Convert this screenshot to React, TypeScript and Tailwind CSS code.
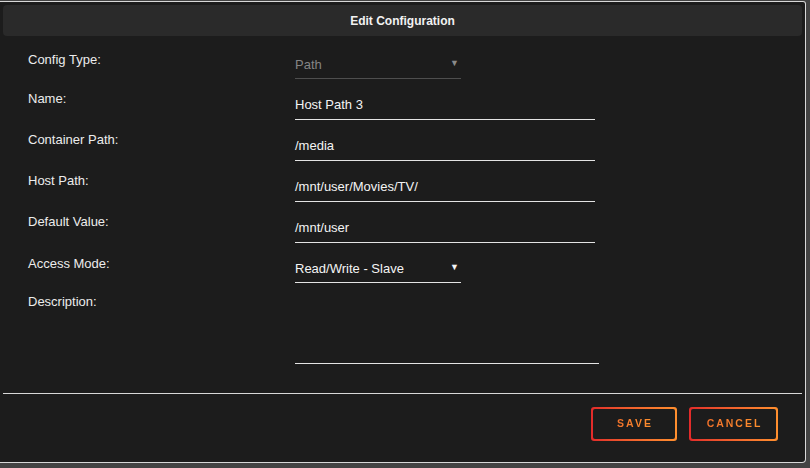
import type { ReactNode } from "react";

const FONT = "font-['Liberation_Sans',Arial,sans-serif]";

function Row({ label, h, children }: { label: string; h: string; children: ReactNode }) {
  return (
    <div className={`flex ${h}`}>
      <div className="w-[295px] shrink-0 pl-[28px] text-[13px] leading-4 text-[#ececec]">{label}</div>
      <div>{children}</div>
    </div>
  );
}

function TextField({ value }: { value: string }) {
  return (
    <div className="flex h-[29px] w-[300px] items-center border-b border-[#e4e4e4] pb-px text-[13px] text-[#f4f4f4]">
      {value}
    </div>
  );
}

function SelectField({ value, disabled }: { value: string; disabled?: boolean }) {
  return (
    <div
      className={`flex h-[27px] w-[166px] items-center justify-between border-b pb-px text-[13px] ${
        disabled ? "border-[#4e4e4e] text-[#858585]" : "border-[#e4e4e4] text-[#f4f4f4]"
      }`}
    >
      <span>{value}</span>
      <span className={`mr-[2px] mb-[2px] text-[9px] ${disabled ? "text-[#8a8a8a]" : "text-[#f4f4f4]"}`}>▼</span>
    </div>
  );
}

function GradientButton({ label, w }: { label: string; w: string }) {
  return (
    <div className={`${w} h-[34px] rounded-[3px] bg-gradient-to-r from-[#e22a2a] to-[#ff8f2e] p-[2px]`}>
      <div className="flex h-full w-full items-center justify-center rounded-[2px] bg-[#1c1c1c]">
        <span className="bg-gradient-to-r from-[#f2702a] to-[#ff902e] bg-clip-text pl-[2px] text-[10.5px] font-bold tracking-[2px] text-transparent">
          {label}
        </span>
      </div>
    </div>
  );
}

export default function App() {
  return (
    <div className={`relative h-[468px] w-[810px] overflow-hidden bg-[#434343] ${FONT}`}>
      <div className="mt-px h-[462px] w-[806px] rounded-br-[4px] rounded-tr-[3px] border border-l-0 border-[#d8d8d8] bg-[#1c1c1c] pt-[3px]">
        {/* Header */}
        <div className="mx-[3px] flex h-[31px] items-center justify-center rounded-[4px] bg-[#2a2a2a] text-[12px] font-bold text-[#f2f2f2]">
          Edit Configuration
        </div>

        {/* Form rows */}
        <div className="mt-[16px]">
          <Row label="Config Type:" h="h-[39px]">
            <SelectField value="Path" disabled />
          </Row>
          <Row label="Name:" h="h-[41px]">
            <TextField value="Host Path 3" />
          </Row>
          <Row label="Container Path:" h="h-[41px]">
            <TextField value="/media" />
          </Row>
          <Row label="Host Path:" h="h-[41px]">
            <TextField value="/mnt/user/Movies/TV/" />
          </Row>
          <Row label="Default Value:" h="h-[42px]">
            <TextField value="/mnt/user" />
          </Row>
          <Row label="Access Mode:" h="h-[38px]">
            <SelectField value="Read/Write - Slave" />
          </Row>
          <Row label="Description:" h="h-[70px]">
            <div className="h-[70px] w-[304px] border-b border-[#e4e4e4]" />
          </Row>
        </div>

        {/* Footer */}
        <div className="mx-[3px] mt-[29px] border-t border-[#d8d8d8]" />
        <div className="mr-[27px] mt-[13px] flex justify-end gap-[12px]">
          <GradientButton label="SAVE" w="w-[86px]" />
          <GradientButton label="CANCEL" w="w-[89px]" />
        </div>
      </div>

      <div className="absolute left-[123px] top-[464px] text-[11px] font-bold text-[#d98a2b]">
        Container Variable: PUID
      </div>
    </div>
  );
}
